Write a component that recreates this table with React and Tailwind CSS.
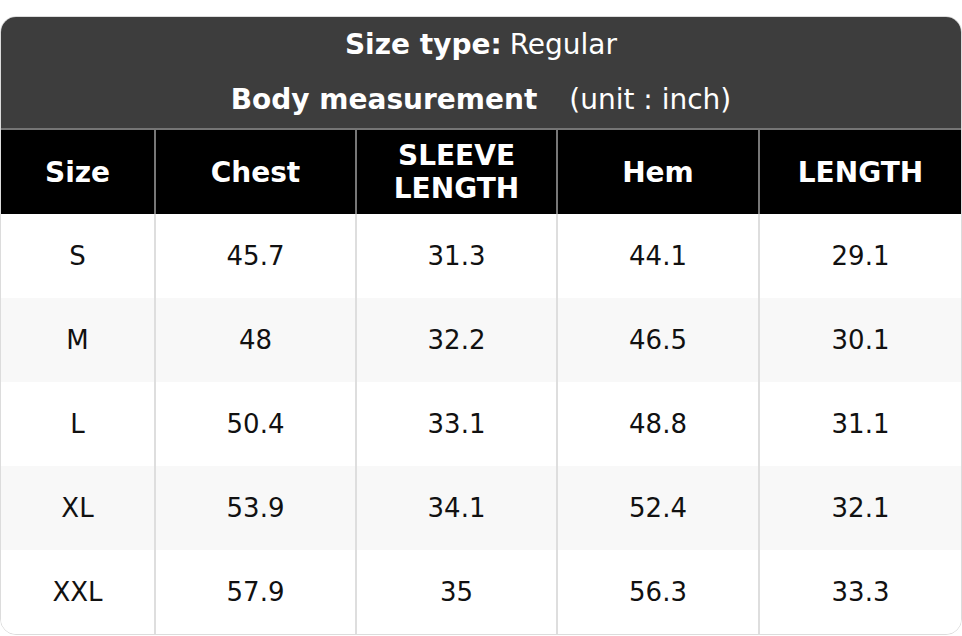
import React from "react";

const heads = ["Size", "Chest", "SLEEVE LENGTH", "Hem", "LENGTH"];

const rows = [
  ["S", "45.7", "31.3", "44.1", "29.1"],
  ["M", "48", "32.2", "46.5", "30.1"],
  ["L", "50.4", "33.1", "48.8", "31.1"],
  ["XL", "53.9", "34.1", "52.4", "32.1"],
  ["XXL", "57.9", "35", "56.3", "33.3"],
];

const cols = "grid grid-cols-[153px_201px_201px_202px_1fr]";

const App = () => {
  return (
    <div className="w-[962px] h-[636px] bg-white pt-4 font-['DejaVu_Sans',sans-serif]">
      <div className="rounded-[16px] overflow-hidden border border-[#dcdcdc]">
        {/* title block */}
        <div className="bg-[#3d3d3d] text-white text-[28px] border-b-2 border-[#757575]">
          <div className="h-[55px] flex items-center justify-center">
            <span className="font-bold">Size type:</span>
            <span className="ml-2">Regular</span>
          </div>
          <div className="h-[56px] flex items-center justify-center">
            <span className="font-bold">Body measurement</span>
            <span className="ml-8">(unit : inch)</span>
          </div>
        </div>

        {/* header row */}
        <div className={`${cols} bg-black text-white font-bold text-[28px] h-[84px]`}>
          {heads.map((h, i) => (
            <div
              key={h}
              className={`flex items-center justify-center text-center leading-[33px] px-6 ${
                i > 0 ? "border-l-2 border-[#777]" : ""
              }`}
            >
              {h}
            </div>
          ))}
        </div>

        {/* body */}
        {rows.map((r, ri) => (
          <div
            key={r[0]}
            className={`${cols} h-[84px] text-[26px] text-[#111] ${
              ri % 2 === 1 ? "bg-[#f8f8f8]" : "bg-white"
            }`}
          >
            {r.map((c, i) => (
              <div
                key={i}
                className={`flex items-center justify-center ${
                  i > 0 ? "border-l-2 border-[#dedede]" : ""
                }`}
              >
                {c}
              </div>
            ))}
          </div>
        ))}
      </div>
    </div>
  );
};

export default App;
